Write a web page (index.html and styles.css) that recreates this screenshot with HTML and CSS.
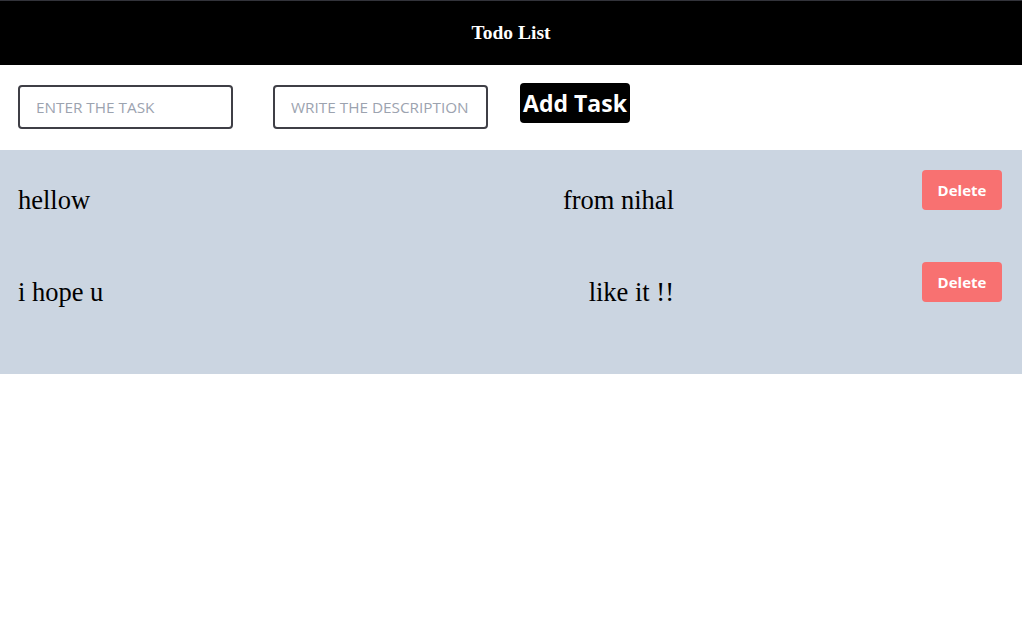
FILE: index.html
```html
<!DOCTYPE html>
<html>
<head>
<meta charset="utf-8">
<title>Todo List</title>
<link rel="stylesheet" href="styles.css">
</head>
<body>
  <header class="topbar">
    <h1 class="title">Todo List</h1>
  </header>
  <form class="entry">
    <input class="field" type="text" placeholder="ENTER THE TASK">
    <input class="field field-wide" type="text" placeholder="WRITE THE DESCRIPTION">
    <button class="add-btn" type="button">Add Task</button>
  </form>
  <section class="list">
    <div class="row">
      <div class="texts">
        <span class="task">hellow</span>
        <span class="desc">from nihal</span>
      </div>
      <button class="del-btn" type="button">Delete</button>
    </div>
    <div class="row">
      <div class="texts">
        <span class="task">i hope u</span>
        <span class="desc">like it !!</span>
      </div>
      <button class="del-btn" type="button">Delete</button>
    </div>
  </section>
</body>
</html>
```
FILE: styles.css
```css
* { box-sizing: border-box; }
body {
  margin: 0;
  background: #ffffff;
  font-family: "Liberation Serif", serif;
}
.topbar {
  height: 65px;
  background: #000000;
  border-top: 1px solid #32333a;
  display: flex;
  align-items: center;
  justify-content: center;
}
.title {
  margin: 0;
  color: #ffffff;
  font-family: "Liberation Serif", serif;
  font-weight: 700;
  font-size: 19.5px;
  line-height: 24px;
}
.entry {
  display: flex;
  align-items: flex-start;
  padding: 18px 18px 0 18px;
  height: 85px;
}
.field {
  margin-top: 2px;
  width: 215px;
  height: 44px;
  border: 2px solid #3f3f46;
  border-radius: 4px;
  padding: 0 0 0 16px;
  font-family: "Open Sans", sans-serif;
  font-size: 15.3px;
  color: #111827;
  outline: none;
}
.field::placeholder {
  color: #9ca3af;
}
.field-wide {
  margin-left: 40px;
}
.add-btn {
  margin-left: 32px;
  width: 110px;
  height: 40px;
  background: #000000;
  color: #ffffff;
  border: none;
  border-radius: 4px;
  font-family: "Open Sans", sans-serif;
  font-weight: 700;
  font-size: 23px;
  padding: 0;
}
.list {
  background: #cbd5e1;
  padding-bottom: 40px;
}
.row {
  display: flex;
  align-items: flex-start;
  height: 92px;
  padding: 20px 20px 0 18px;
}
.texts {
  width: 656px;
  display: flex;
  justify-content: space-between;
  margin-top: 14px;
  font-size: 26.5px;
  line-height: 32px;
  color: #000000;
}
.del-btn {
  margin-left: auto;
  width: 80px;
  height: 40px;
  background: #f87171;
  color: #ffffff;
  border: none;
  border-radius: 4px;
  font-family: "Open Sans", sans-serif;
  font-weight: 700;
  font-size: 15px;
  padding: 0;
}
```
